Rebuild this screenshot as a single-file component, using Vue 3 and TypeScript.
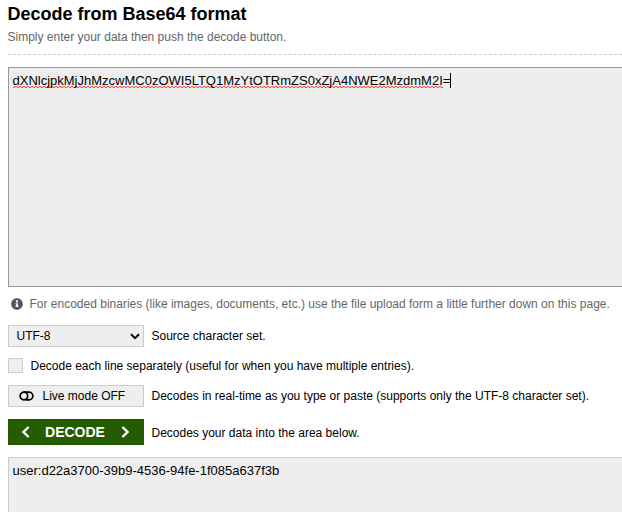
<script setup lang="ts">
import { ref } from 'vue'

const encoded = ref('dXNlcjpkMjJhMzcwMC0zOWI5LTQ1MzYtOTRmZS0xZjA4NWE2MzdmM2I')
const padding = ref('=')
const decoded = ref('user:d22a3700-39b9-4536-94fe-1f085a637f3b')
const charset = ref('UTF-8')
</script>

<template>
  <main class="page">
    <header class="head">
      <h1>Decode from Base64 format</h1>
      <p>Simply enter your data then push the decode button.</p>
    </header>

    <div class="area input"><span class="misspelled">{{ encoded }}</span>{{ padding }}<i class="caret"></i></div>

    <div class="hint">
      <svg width="12" height="12" viewBox="0 0 512 512">
        <path
          fill="#555"
          d="M256 8C119 8 8 119 8 256s111 248 248 248 248-111 248-248S393 8 256 8zm0 90c26 0 46 20 46 46s-20 46-46 46-46-20-46-46 20-46 46-46zm64 274c0 7-5 12-12 12h-104c-7 0-12-5-12-12v-28c0-7 5-12 12-12h16v-60h-16c-7 0-12-5-12-12v-28c0-7 5-12 12-12h76c7 0 12 5 12 12v100h16c7 0 12 5 12 12v28z"
        />
      </svg>
      <span>For encoded binaries (like images, documents, etc.) use the file upload form a little further down on this page.</span>
    </div>

    <div class="row charset">
      <div class="control select">
        <span>{{ charset }}</span>
        <svg width="10" height="7" viewBox="0 0 10 7">
          <path d="M1 1.2L5 5.2L9 1.2" fill="none" stroke="#000" stroke-width="2" />
        </svg>
      </div>
      <span>Source character set.</span>
    </div>

    <label class="row lines">
      <span class="box"></span>
      <span>Decode each line separately (useful for when you have multiple entries).</span>
    </label>

    <div class="row live">
      <div class="control toggle">
        <svg width="15" height="10" viewBox="0 0 15 10">
          <path d="M5 1.15H10A3.85 3.85 0 0 1 10 8.85H6.5" fill="none" stroke="#000" stroke-width="1.7" />
          <circle cx="4.9" cy="5" r="3.8" fill="none" stroke="#000" stroke-width="1.7" />
        </svg>
        <span>Live mode OFF</span>
      </div>
      <span>Decodes in real-time as you type or paste (supports only the UTF-8 character set).</span>
    </div>

    <div class="row submit">
      <button type="button" class="decode">
        <svg width="9" height="12" viewBox="0 0 9 12">
          <path d="M7.6 1L2.4 6L7.6 11" fill="none" stroke="#fff" stroke-width="2.4" />
        </svg>
        <span>DECODE</span>
        <svg width="9" height="12" viewBox="0 0 9 12">
          <path d="M1.4 1L6.6 6L1.4 11" fill="none" stroke="#fff" stroke-width="2.4" />
        </svg>
      </button>
      <span class="note">Decodes your data into the area below.</span>
    </div>

    <div class="area output">{{ decoded }}</div>
  </main>
</template>

<style>
body {
  background: #fff;
  overflow: hidden;
}
</style>

<style scoped>
.page {
  box-sizing: border-box;
  height: 512px;
  padding-left: 7.5px;
  overflow: hidden;
  display: flex;
  flex-direction: column;
  font: 12px/16px "Liberation Sans", Arial, sans-serif;
  color: #000;
  white-space: nowrap;
}
.page > * {
  flex-shrink: 0;
}
.head {
  box-sizing: border-box;
  height: 55px;
  border-bottom: 1px dashed #ccc;
}
h1 {
  margin: 0;
  padding-top: 3px;
  font-size: 18px;
  line-height: 22px;
  font-weight: bold;
}
.head p {
  margin: 4px 0 0;
  color: #666;
}
.area {
  box-sizing: border-box;
  margin-right: -10px;
  padding: 5px 4px;
  background: #eee;
  font-size: 13px;
  line-height: 15px;
}
.input {
  height: 220px;
  margin-top: 12px;
  border: 1px solid #999;
}
.misspelled {
  background:
    repeating-linear-gradient(90deg, #ff5050 0 2px, #f3d2d2 2px 4px) 0 100% / 100% 1px no-repeat,
    repeating-linear-gradient(90deg, #f3d2d2 0 2px, #ff5050 2px 4px) 0 calc(100% - 1px) / 100% 1px no-repeat;
}
.caret {
  display: inline-block;
  width: 1px;
  height: 15px;
  vertical-align: top;
  background: #000;
}
.hint {
  display: flex;
  align-items: center;
  gap: 7px;
  height: 16px;
  margin-top: 9px;
  padding-left: 3px;
  color: #666;
}
.hint svg {
  margin-bottom: 1px;
}
.row {
  display: flex;
  align-items: center;
  gap: 8px;
}
.control {
  box-sizing: border-box;
  display: flex;
  align-items: center;
  width: 136px;
  height: 22px;
  border: 1px solid #ccc;
  background: #eee;
}
.charset {
  margin-top: 13px;
}
.select {
  justify-content: space-between;
  padding: 0 3px 0 8px;
}
.lines {
  height: 15px;
  margin-top: 11px;
}
.box {
  box-sizing: border-box;
  width: 15px;
  height: 15px;
  border: 1px solid #ccc;
  background: #eee;
}
.live {
  margin-top: 12px;
}
.toggle {
  gap: 9px;
  padding-left: 10px;
}
.submit {
  margin-top: 12px;
}
.note {
  padding-top: 2px;
}
.decode {
  display: flex;
  align-items: center;
  justify-content: space-between;
  width: 136px;
  height: 26px;
  padding: 0 14px 0 13px;
  border: 0;
  background: #265c00;
  color: #fff;
  font: bold 14px/16px "Liberation Sans", Arial, sans-serif;
}
.output {
  height: 70px;
  margin-top: 12px;
  border: 1px solid #ccc;
}
</style>
